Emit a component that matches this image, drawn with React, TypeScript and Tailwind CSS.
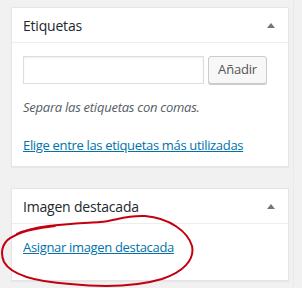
import React from "react";

function Triangle() {
  return (
    <svg width="8" height="5" viewBox="0 0 8 5" className="block">
      <path d="M0 5 L4 0 L8 5 Z" fill="#72777c" />
    </svg>
  );
}

export default function App() {
  const font = { fontFamily: "'Open Sans', 'Liberation Sans', sans-serif" };
  return (
    <div
      className="relative w-[302px] h-[288px] overflow-hidden bg-[#f1f1f1] flex"
      style={font}
    >
      <div className="w-[294px] h-full border-r border-[#e9e9e9] pt-[7px] pl-[11px]">
        {/* Etiquetas */}
        <div className="w-[278px] bg-white border border-[#e5e5e5] shadow-[0_1px_1px_rgba(0,0,0,0.04)]">
          <div className="h-[35px] border-b border-[#eeeeee] flex items-center justify-between pl-[11px] pr-[13px]">
            <span className="text-[14px] tracking-[-0.2px] text-[#23282d]">Etiquetas</span>
            <Triangle />
          </div>
          <div className="pl-[11px] pr-[12px] pt-[13px] pb-[11px]">
            <div className="flex gap-[4px]">
              <div className="w-[181px] h-[28px] border border-[#dddddd] shadow-[inset_0_1px_2px_rgba(0,0,0,0.07)] bg-white" />
              <div className="w-[59px] h-[28px] rounded-[3px] border border-[#cccccc] bg-[#f7f7f7] shadow-[0_1px_0_#cccccc] flex items-center justify-center text-[13px] tracking-[-0.2px] text-[#555555]">
                Añadir
              </div>
            </div>
            <p className="mt-[14px] text-[13px] leading-[19px] tracking-[-0.25px] italic text-[#555d66]">
              Separa las etiquetas con comas.
            </p>
            <p className="mt-[19px] text-[13px] leading-[19px] tracking-[-0.33px]">
              <a className="text-[#0073aa] underline">Elige entre las etiquetas más utilizadas</a>
            </p>
          </div>
        </div>

        {/* Imagen destacada */}
        <div className="mt-[21px] w-[278px] bg-white border border-[#e5e5e5] shadow-[0_1px_1px_rgba(0,0,0,0.04)]">
          <div className="h-[35px] border-b border-[#eeeeee] flex items-center justify-between pl-[11px] pr-[13px]">
            <span className="text-[14px] tracking-[-0.2px] text-[#23282d]">Imagen destacada</span>
            <Triangle />
          </div>
          <div className="pl-[11px] pr-[12px] pt-[14px] pb-[23px]">
            <p className="text-[13px] leading-[19px] tracking-[-0.33px]">
              <a className="text-[#0073aa] underline">Asignar imagen destacada</a>
            </p>
          </div>
        </div>
      </div>

      <svg
        className="absolute left-0 top-0 pointer-events-none"
        width="302"
        height="288"
        viewBox="0 0 302 288"
      >
        <path
          d="M17 234 C35 225 70 224 100 222 C115 221 125 215 145 216 C170 218 188 232 192 246 C195 260 183 272 162 279 C135 287 100 287 70 284 C40 282 12 276 4 262 C-1 250 4 240 14 236 C25 230 40 228 55 226"
          fill="none"
          stroke="#c40010"
          strokeWidth="2"
          strokeLinecap="round"
        />
      </svg>
    </div>
  );
}
